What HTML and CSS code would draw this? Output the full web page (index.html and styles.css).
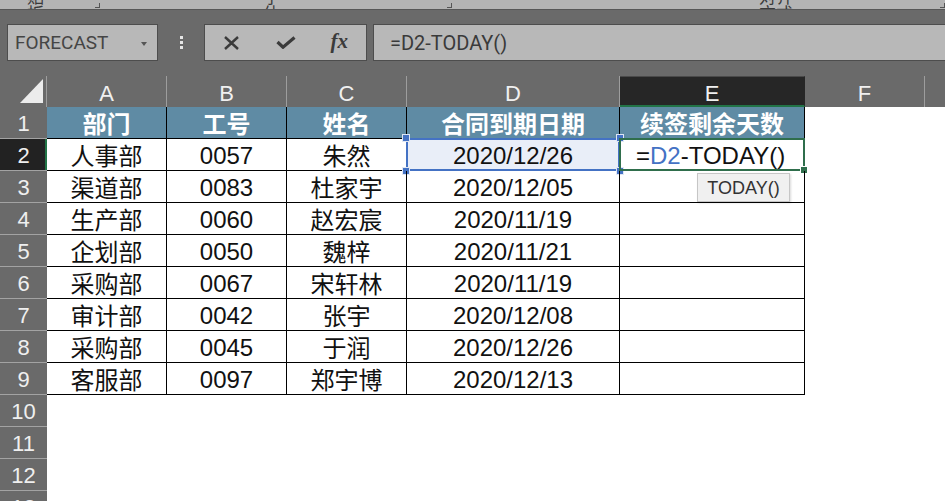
FILE: index.html
```html
<!DOCTYPE html>
<html>
<head>
    <title>Excel - 续签剩余天数</title>
    <link rel="stylesheet" href="styles.css">
</head>
<body>
    <div class="ribbon-strip">
        <span class="group-label label-clip">剪贴板</span>
        <span class="launcher launch-clip"></span>
        <span class="group-label label-font">字体</span>
        <span class="launcher launch-font"></span>
        <span class="group-label label-align">对齐方式</span>
        <span class="launcher launch-align"></span>
    </div>

    <div class="formula-bar">
        <div class="name-box">
            <span>FORECAST</span>
            <span class="name-arrow"></span>
        </div>
        <div class="grip"><i></i><i></i><i></i></div>
        <div class="fx-buttons">
            <span class="fx-btn">
                <svg width="17" height="14" viewBox="0 0 17 14"><path d="M2 1 L15 13 M15 1 L2 13" stroke="#3b3b3b" stroke-width="2.4" fill="none"/></svg>
            </span>
            <span class="fx-btn">
                <svg width="20" height="13" viewBox="0 0 20 13"><path d="M1.5 6 L7 11.2 L18.5 1.5" stroke="#3b3b3b" stroke-width="3.2" fill="none"/></svg>
            </span>
            <span class="fx-btn fx-label">fx</span>
        </div>
        <div class="formula-input">=D2-TODAY()</div>
    </div>

    <div class="sheet">
        <!-- column headers -->
        <div class="corner">
            <svg width="47" height="31" viewBox="0 0 47 31"><polygon points="20,27 43,27 43,3" fill="#ececec"/></svg>
        </div>
        <div class="col-head">A</div>
        <div class="col-head">B</div>
        <div class="col-head">C</div>
        <div class="col-head">D</div>
        <div class="col-head col-active">E</div>
        <div class="col-head">F</div>
        <div class="col-head col-rest"></div>

        <!-- row 1 -->
        <div class="row-head">1</div>
        <div class="cell title">部门</div>
        <div class="cell title">工号</div>
        <div class="cell title">姓名</div>
        <div class="cell title">合同到期日期</div>
        <div class="cell title">续签剩余天数</div>
        <div class="blank-rest"></div>

        <!-- row 2 -->
        <div class="row-head row-active">2</div>
        <div class="cell">人事部</div>
        <div class="cell num">0057</div>
        <div class="cell">朱然</div>
        <div class="cell num ref-cell">2020/12/26
            <span class="ref-box"></span>
            <span class="handle h-tl"></span><span class="handle h-tr"></span>
            <span class="handle h-bl"></span><span class="handle h-br"></span>
        </div>
        <div class="cell num edit-cell">
            <span>=<span class="ref-text">D2</span>-TODAY()</span>
            <span class="edit-box"></span>
            <span class="edit-handle"></span>
        </div>
        <div class="blank-rest"></div>

        <!-- row 3 -->
        <div class="row-head">3</div>
        <div class="cell">渠道部</div>
        <div class="cell num">0083</div>
        <div class="cell">杜家宇</div>
        <div class="cell num">2020/12/05</div>
        <div class="cell tip-anchor"><span class="tooltip">TODAY()</span></div>
        <div class="blank-rest"></div>

        <div class="row-head">4</div>
        <div class="cell">生产部</div>
        <div class="cell num">0060</div>
        <div class="cell">赵宏宸</div>
        <div class="cell num">2020/11/19</div>
        <div class="cell"></div>
        <div class="blank-rest"></div>

        <div class="row-head">5</div>
        <div class="cell">企划部</div>
        <div class="cell num">0050</div>
        <div class="cell">魏梓</div>
        <div class="cell num">2020/11/21</div>
        <div class="cell"></div>
        <div class="blank-rest"></div>

        <div class="row-head">6</div>
        <div class="cell">采购部</div>
        <div class="cell num">0067</div>
        <div class="cell">宋轩林</div>
        <div class="cell num">2020/11/19</div>
        <div class="cell"></div>
        <div class="blank-rest"></div>

        <div class="row-head">7</div>
        <div class="cell">审计部</div>
        <div class="cell num">0042</div>
        <div class="cell">张宇</div>
        <div class="cell num">2020/12/08</div>
        <div class="cell"></div>
        <div class="blank-rest"></div>

        <div class="row-head">8</div>
        <div class="cell">采购部</div>
        <div class="cell num">0045</div>
        <div class="cell">于润</div>
        <div class="cell num">2020/12/26</div>
        <div class="cell"></div>
        <div class="blank-rest"></div>

        <div class="row-head">9</div>
        <div class="cell">客服部</div>
        <div class="cell num">0097</div>
        <div class="cell">郑宇博</div>
        <div class="cell num">2020/12/13</div>
        <div class="cell"></div>
        <div class="blank-rest"></div>

        <!-- empty rows -->
        <div class="row-head">10</div>
        <div class="blank-row"></div>
        <div class="row-head">11</div>
        <div class="blank-row"></div>
        <div class="row-head">12</div>
        <div class="blank-row"></div>
        <div class="row-head">13</div>
        <div class="blank-row"></div>
    </div>
</body>
</html>
```

FILE: styles.css
```css
/* spreadsheet window */
body {
    margin: 0;
    width: 945px;
    height: 501px;
    overflow: hidden;
    background-color: #fff;
    font-family: "Liberation Sans", "Noto Sans CJK SC", sans-serif;
}

/* bottom edge of the ribbon, mostly cut off */
.ribbon-strip {
    height: 9px;
    background-color: #b4b4b4;
    overflow: hidden;
    display: flex;
    align-items: flex-end;
    font-family: "Noto Sans CJK SC", sans-serif;
    font-size: 17px;
    line-height: 17px;
    color: #3a3a3a;
}
.group-label {
    margin-bottom: -12px;
}
.label-clip {
    margin-left: 27px;
}
.label-font {
    margin-left: 163px;
}
.label-align {
    margin-left: 307px;
}
.launcher {
    width: 7px;
    height: 4px;
    border-right: 1px solid #555;
    border-bottom: 1px solid #555;
    margin-bottom: 1px;
}
.launch-clip {
    margin-left: 36px;
}
.launch-font {
    margin-left: 162px;
}
.launch-align {
    margin-left: 138px;
}

/* name box + formula bar */
.formula-bar {
    height: 67px;
    box-sizing: border-box;
    background-color: #6a6a6a;
    border-top: 1px solid #575757;
    padding: 14px 0 0 7px;
    display: flex;
    align-items: flex-start;
}
.name-box {
    width: 151px;
    height: 37px;
    box-sizing: border-box;
    background-color: #b8b8b8;
    border: 1px solid #4d4d4d;
    display: flex;
    align-items: center;
    justify-content: space-between;
    padding: 0 10px 0 7px;
    font-family: Roboto, sans-serif;
    font-size: 19px;
    color: #454545;
}
.name-arrow {
    width: 0;
    height: 0;
    border-left: 3px solid transparent;
    border-right: 3px solid transparent;
    border-top: 4px solid #555;
    margin-top: 2px;
}
.grip {
    width: 46px;
    height: 37px;
    display: flex;
    flex-direction: column;
    align-items: center;
    justify-content: center;
    gap: 2px;
}
.grip i {
    display: block;
    width: 3px;
    height: 3px;
    background-color: #e6e6e6;
}
.fx-buttons {
    width: 163px;
    height: 37px;
    box-sizing: border-box;
    background-color: #b8b8b8;
    border: 1px solid #4d4d4d;
    display: flex;
    align-items: center;
}
.fx-btn {
    width: 54px;
    display: flex;
    justify-content: center;
    align-items: center;
}
.fx-label {
    font-family: "Liberation Serif", serif;
    font-style: italic;
    font-weight: bold;
    font-size: 21px;
    color: #3b3b3b;
    margin-top: -3px;
}
.formula-input {
    flex: 1;
    height: 37px;
    box-sizing: border-box;
    margin-left: 6px;
    background-color: #b8b8b8;
    border: 1px solid #4d4d4d;
    border-right: none;
    padding-left: 16px;
    display: flex;
    align-items: center;
    font-family: Roboto, sans-serif;
    font-size: 20px;
    color: #3a3a3a;
}

/* grid */
.sheet {
    display: grid;
    grid-template-columns: 47px 120px 120px 120px 213px 185px 120px 1fr;
    grid-template-rows: 31px repeat(13, 32px);
}
.corner,
.col-head {
    background-color: #6a6a6a;
    border-right: 1px solid #9d9d9d;
    box-sizing: border-box;
}
.col-head {
    display: flex;
    align-items: center;
    justify-content: center;
    font-size: 22px;
    color: #f0f0f0;
    padding-top: 5px;
}
.col-active {
    background-color: #262626;
    border-top: 1px solid #4a4a4a;
    border-bottom: 2px solid #217346;
    border-right-color: #262626;
    padding-top: 6px;
}
.col-rest {
    border-right: none;
}
.row-head {
    background-color: #6a6a6a;
    border-bottom: 1px solid #a3a3a3;
    box-sizing: border-box;
    display: flex;
    align-items: center;
    justify-content: center;
    font-size: 22px;
    color: #efefef;
    padding-top: 2px;
}
.row-active {
    background-color: #222;
    box-shadow: inset -2px 0 0 #217346;
}
.cell {
    position: relative;
    box-sizing: border-box;
    border-right: 1px solid #000;
    border-bottom: 1px solid #000;
    display: flex;
    align-items: center;
    justify-content: center;
    font-family: "Noto Sans CJK SC", sans-serif;
    font-size: 24px;
    line-height: 28px;
    color: #111;
}
.cell.num {
    font-family: "Liberation Sans", sans-serif;
    font-size: 24px;
    padding-top: 2px;
}
.title {
    background-color: #5f8ba4;
    color: #fff;
    font-weight: bold;
    font-size: 24px;
    line-height: 28px;
}
.blank-rest {
    grid-column: span 2;
}
.blank-row {
    grid-column: 2 / -1;
}

/* reference highlight on D2 */
.ref-cell {
    background-color: #e9eef8;
}
.ref-box {
    position: absolute;
    top: -1px;
    left: -1px;
    right: -1px;
    bottom: -1px;
    border: 2px solid #4472c4;
}
.handle {
    position: absolute;
    width: 6px;
    height: 6px;
    background-color: #4472c4;
    border: 1px solid #dfe6f3;
}
.h-tl {
    top: -5px;
    left: -5px;
}
.h-tr {
    top: -5px;
    right: -5px;
}
.h-bl {
    bottom: -5px;
    left: -5px;
}
.h-br {
    bottom: -5px;
    right: -5px;
}

/* cell being edited */
.edit-cell {
    justify-content: flex-start;
    padding-left: 16px;
}
.ref-text {
    color: #4472c4;
}
.edit-box {
    position: absolute;
    top: -1px;
    left: -1px;
    right: -1px;
    bottom: -1px;
    border: 2px solid #2f6e4c;
}
.edit-handle {
    position: absolute;
    right: -4px;
    bottom: -4px;
    width: 6px;
    height: 6px;
    background-color: #2f6e4c;
    border: 1px solid #fff;
}
.tooltip {
    position: absolute;
    top: 2px;
    left: 77px;
    width: 93px;
    height: 29px;
    box-sizing: border-box;
    background-color: #f0f0f0;
    border: 1px solid #c6c6c6;
    box-shadow: 1px 1px 2px rgba(0, 0, 0, 0.15);
    display: flex;
    align-items: center;
    justify-content: center;
    font-family: "Liberation Sans", sans-serif;
    font-size: 18px;
    color: #333;
}
.tip-anchor {
    z-index: 1;
}
```
